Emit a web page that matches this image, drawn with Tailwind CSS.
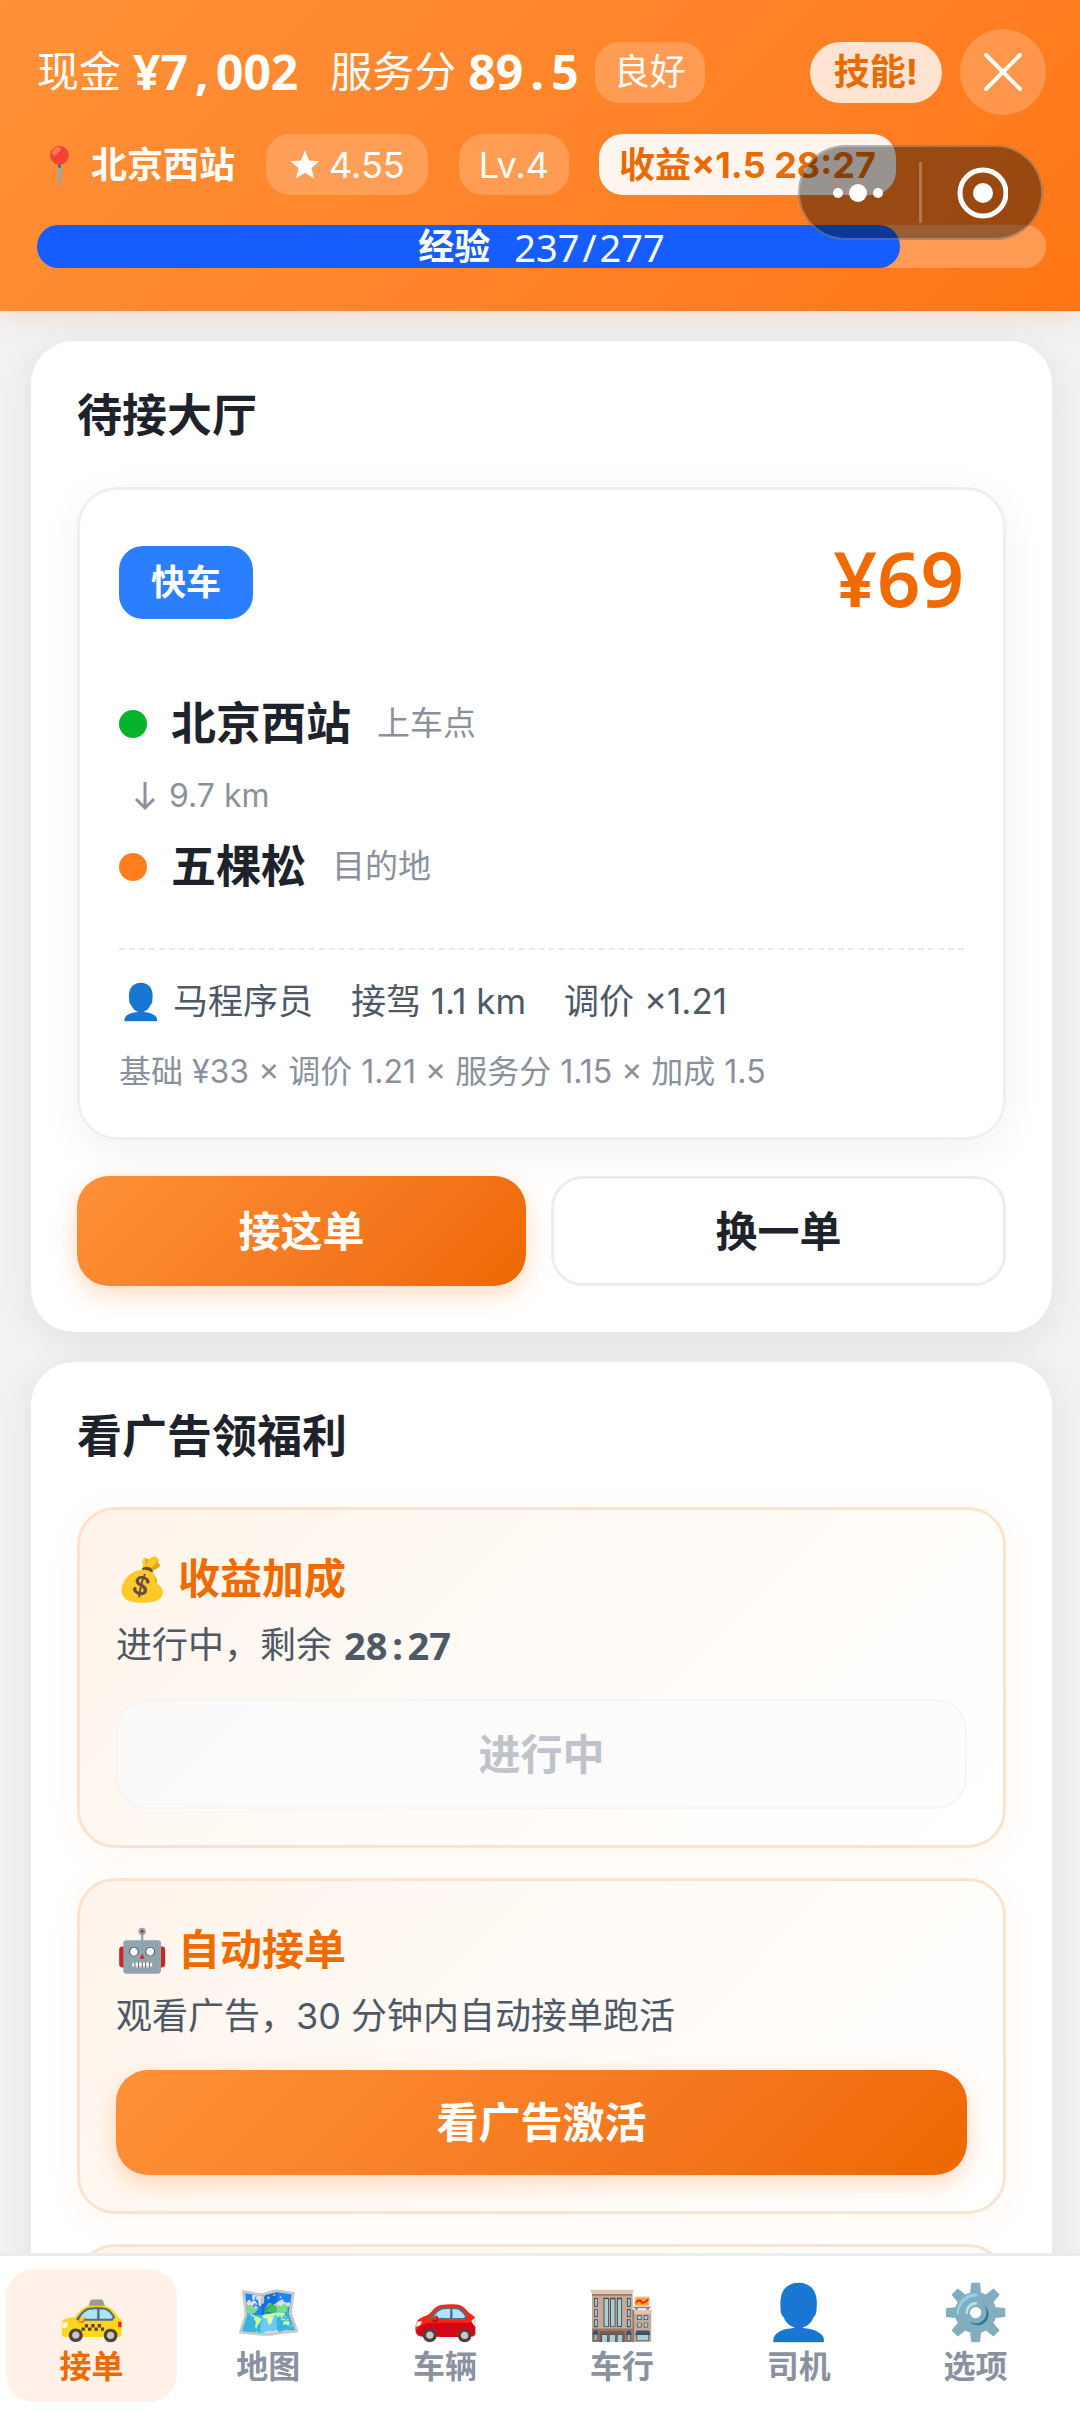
<!DOCTYPE html>
<html lang="zh-CN">
<head>
<meta charset="utf-8">
<meta name="viewport" content="width=device-width, initial-scale=1">
<title>接单</title>
<script src="https://cdn.jsdelivr.net/npm/@tailwindcss/browser@4"></script>
</head>
<body class="flex h-screen flex-col overflow-hidden bg-[#f1f2f4] font-['Inter','Noto_Sans_CJK_SC',sans-serif] text-[#1e222b]">

<header class="relative z-10 flex shrink-0 flex-col bg-linear-135 from-[#ff9138] to-[#ff7615] pt-[30px] pr-[34px] pb-[43px] pl-[37px] text-white shadow-[0_6px_24px_rgba(255,118,21,0.18)]">
  <div class="flex h-[86px] items-center pb-[2px]">
    <span class="text-[42px] leading-[60px]">现金</span>
    <strong class="ml-3 font-['Noto_Sans'] text-[48px] leading-[60px]">¥7<span class="inline-block w-7 text-center">,</span>002</strong>
    <span class="ml-8 text-[42px] leading-[60px]">服务分</span>
    <strong class="ml-3 font-['Noto_Sans'] text-[48px] leading-[60px]">89<span class="inline-block w-7 text-center">.</span>5</strong>
    <span class="ml-4 flex h-[61px] items-center rounded-3xl bg-white/20 px-[19px] text-[36px]">良好</span>
    <button class="ml-auto flex h-[61px] items-center rounded-full bg-[#ffe4d2] px-6 text-[36px] font-bold text-[#e86b00]">技能!</button>
    <button aria-label="关闭" class="ml-[18px] flex size-[86px] items-center justify-center rounded-full bg-white/20">
      <svg class="size-10" viewBox="0 0 40 40" fill="none" stroke="#fff" stroke-width="4" stroke-linecap="round"><path d="M3 3 37 37M37 3 3 37"/></svg>
    </button>
  </div>
  <div class="mt-[18px] flex h-[61px] items-center text-[36px]">
    <span class="w-11 text-center">📍</span>
    <strong class="ml-[10px]">北京西站</strong>
    <span class="ml-[31px] flex h-full items-center rounded-3xl bg-white/20 px-[23px]">
      <svg class="mr-2 size-8" viewBox="0 0 24 24" fill="#fff"><path d="m12 1 3 7.600 8 .5-6.200 5.200 2 7.900L12 17.800 5.200 22.200l2-7.900L1 9.100l8-.5z"/></svg>4.55</span>
    <span class="ml-[31px] flex h-full items-center rounded-3xl bg-white/20 px-5">Lv.4</span>
    <span class="ml-[30px] flex h-full items-center rounded-3xl bg-[#fff5ef] px-5 font-bold text-[#e86b00]">收益×1.5 28:27</span>
  </div>
  <div role="progressbar" aria-label="经验" aria-valuenow="237" aria-valuemax="277" class="mt-[30px] grid h-[43px] rounded-[21px] bg-white/25">
    <div class="col-start-1 row-start-1 h-[43px] rounded-[21px] bg-[#155dff]" style="width:85.56%"></div>
    <div class="col-start-1 row-start-1 flex h-[43px] items-center justify-center"><strong class="text-[36px] leading-[42px]">经验</strong><span class="ml-6 font-['Noto_Sans'] text-[38px] leading-[40px]">237<span class="inline-block w-5 text-center">/</span>277</span></div>
  </div>

  <div class="absolute top-[145px] right-[37px] flex h-[95px] w-[245px] items-center rounded-full border-2 border-white/25 bg-black/40">
    <button aria-label="更多" class="flex h-full flex-1 items-center justify-center">
      <svg class="h-6 w-14" viewBox="0 0 56 24" fill="#fff"><circle cx="6" cy="12" r="5"/><circle cx="26" cy="12" r="9"/><circle cx="46" cy="12" r="5"/></svg>
    </button>
    <span class="h-[61px] w-[3px] bg-white/25"></span>
    <button aria-label="退出" class="flex h-full flex-1 items-center justify-center">
      <svg class="size-[52px]" viewBox="0 0 52 52"><circle cx="27" cy="26" r="23" fill="none" stroke="#fff" stroke-width="5"/><circle cx="27" cy="26" r="10" fill="#fff"/></svg>
    </button>
  </div>
</header>

<main class="flex min-h-0 flex-1 flex-col gap-[30px] overflow-hidden pt-[30px] pr-7 pl-[31px]">
  <section class="shrink-0 rounded-[43px] bg-white px-[46px] pt-10 pb-[46px] shadow-[0_6px_36px_rgba(0,0,0,0.08)]">
    <h2 class="text-[45px] leading-[70px] font-bold">待接大厅</h2>
    <article class="mt-9 rounded-[40px] border-3 border-[#efeff1] px-[39px] pt-[37px] pb-8 shadow-[0_10px_44px_rgba(0,0,0,0.06)]">
      <div class="flex h-[110px] items-center justify-between">
        <span class="flex h-[73px] items-center rounded-3xl bg-[#2b7fff] px-8 text-[35px] font-bold text-white">快车</span>
        <strong class="pb-2 font-['Noto_Sans'] text-[76px] font-semibold text-[#f06a00]">¥69</strong>
      </div>
      <div class="mt-[54px] flex flex-col">
        <div class="flex h-[66px] items-center"><span class="size-7 rounded-full bg-[#06b32c]"></span><strong class="ml-6 text-[45px]">北京西站</strong><span class="ml-[26px] text-[33px] text-[#8b919c]">上车点</span></div>
        <div class="flex h-[77px] items-center pl-3 text-[32px] text-[#8b919c]">
          <svg class="mr-[10px] h-8 w-7" viewBox="0 0 28 32" fill="none" stroke="currentColor" stroke-width="3"><path d="M14 2v26M5 19l9 9 9-9"/></svg>9.7 km</div>
        <div class="flex h-[66px] items-center"><span class="size-7 rounded-full bg-[#ff7f1e]"></span><strong class="ml-6 text-[45px]">五棵松</strong><span class="ml-[26px] text-[33px] text-[#8b919c]">目的地</span></div>
      </div>
      <div class="mt-12 border-t-2 border-dashed border-[#e9eaec] pt-[18px]">
        <div class="flex h-[66px] items-center gap-[38px] text-[35px] text-[#4e5866]"><span class="flex items-center"><span class="w-[54px]">👤</span>马程序员</span><span>接驾 1.1 km</span><span>调价 ×1.21</span></div>
        <p class="mt-[5px] text-[32px] leading-[66px] text-[#8b919c]">基础 ¥33 × 调价 1.21 × 服务分 1.15 × 加成 1.5</p>
      </div>
    </article>
    <div class="mt-9 flex gap-[25px]">
      <button class="h-[110px] flex-1 rounded-[32px] bg-linear-135 from-[#ff9138] to-[#ee6700] text-[42px] font-bold text-white shadow-[0_8px_24px_rgba(255,118,21,0.28)]">接这单</button>
      <button class="h-[110px] flex-1 rounded-[32px] border-3 border-[#ecedef] bg-white text-[42px] font-bold">换一单</button>
    </div>
  </section>

  <section class="shrink-0 rounded-[43px] bg-white px-[46px] pt-10 pb-[46px] shadow-[0_6px_36px_rgba(0,0,0,0.08)]">
    <h2 class="text-[45px] leading-[70px] font-bold">看广告领福利</h2>
    <div class="mt-[35px] flex flex-col gap-[30px]">
      <article class="rounded-[38px] border-3 border-[#fbe3d0] bg-linear-135 from-[#fff4ea] via-[#fffbf7] to-white px-9 pt-[35px] pb-9 shadow-[0_6px_36px_rgba(255,118,21,0.06)]">
        <h3 class="flex h-[66px] items-center text-[42px] font-bold text-[#ee6b00]"><span class="w-[62px]">💰</span>收益加成</h3>
        <p class="flex h-[68px] items-center text-[36px] text-[#4e5866]">进行中，剩余<strong class="ml-3 font-['Noto_Sans'] text-[38px]">28<span class="inline-block w-5 text-center">:</span>27</strong></p>
        <button disabled class="mt-5 h-[110px] w-full rounded-[32px] border-2 border-[#f4f5f6] bg-[#f9fbfc]/75 text-[42px] font-bold text-[#c0c3c9]">进行中</button>
      </article>
      <article class="rounded-[38px] border-3 border-[#fbe3d0] bg-linear-135 from-[#fff4ea] via-[#fffbf7] to-white px-9 pt-[35px] pb-9 shadow-[0_6px_36px_rgba(255,118,21,0.06)]">
        <h3 class="flex h-[66px] items-center text-[42px] font-bold text-[#ee6b00]"><span class="w-[62px]">🤖</span>自动接单</h3>
        <p class="flex h-[68px] items-center text-[36px] text-[#4e5866]">观看广告，30 分钟内自动接单跑活</p>
        <button class="mt-5 h-[105px] w-full rounded-[32px] bg-linear-135 from-[#ff9138] to-[#ee6700] text-[42px] font-bold text-white shadow-[0_8px_24px_rgba(255,118,21,0.28)]">看广告激活</button>
      </article>
      <article class="h-[335px] rounded-[38px] border-3 border-[#fbe3d0] bg-linear-135 from-[#fff4ea] via-[#fffbf7] to-white"></article>
    </div>
  </section>
</main>

<nav class="relative z-10 grid shrink-0 grid-cols-6 gap-[6px] border-t-3 border-[#ebecee] bg-white pt-[13px] pr-[19px] pb-3 pl-[6px] text-[32px] leading-9 font-bold text-[#8a929f]">
  <a href="#" class="flex h-[133px] flex-col items-center justify-center rounded-[28px] bg-[#fff1e8] pb-3 text-[#ee6b00]"><span class="text-[54px] leading-[74px]">🚕</span>接单</a>
  <a href="#" class="flex h-[133px] flex-col items-center justify-center pb-3"><span class="text-[54px] leading-[74px]">🗺️</span>地图</a>
  <a href="#" class="flex h-[133px] flex-col items-center justify-center pb-3"><span class="text-[54px] leading-[74px]">🚗</span>车辆</a>
  <a href="#" class="flex h-[133px] flex-col items-center justify-center pb-3"><span class="text-[54px] leading-[74px]">🏬</span>车行</a>
  <a href="#" class="flex h-[133px] flex-col items-center justify-center pb-3"><span class="text-[54px] leading-[74px]">👤</span>司机</a>
  <a href="#" class="flex h-[133px] flex-col items-center justify-center pb-3"><span class="text-[54px] leading-[74px]">⚙️</span>选项</a>
</nav>
</body>
</html>
